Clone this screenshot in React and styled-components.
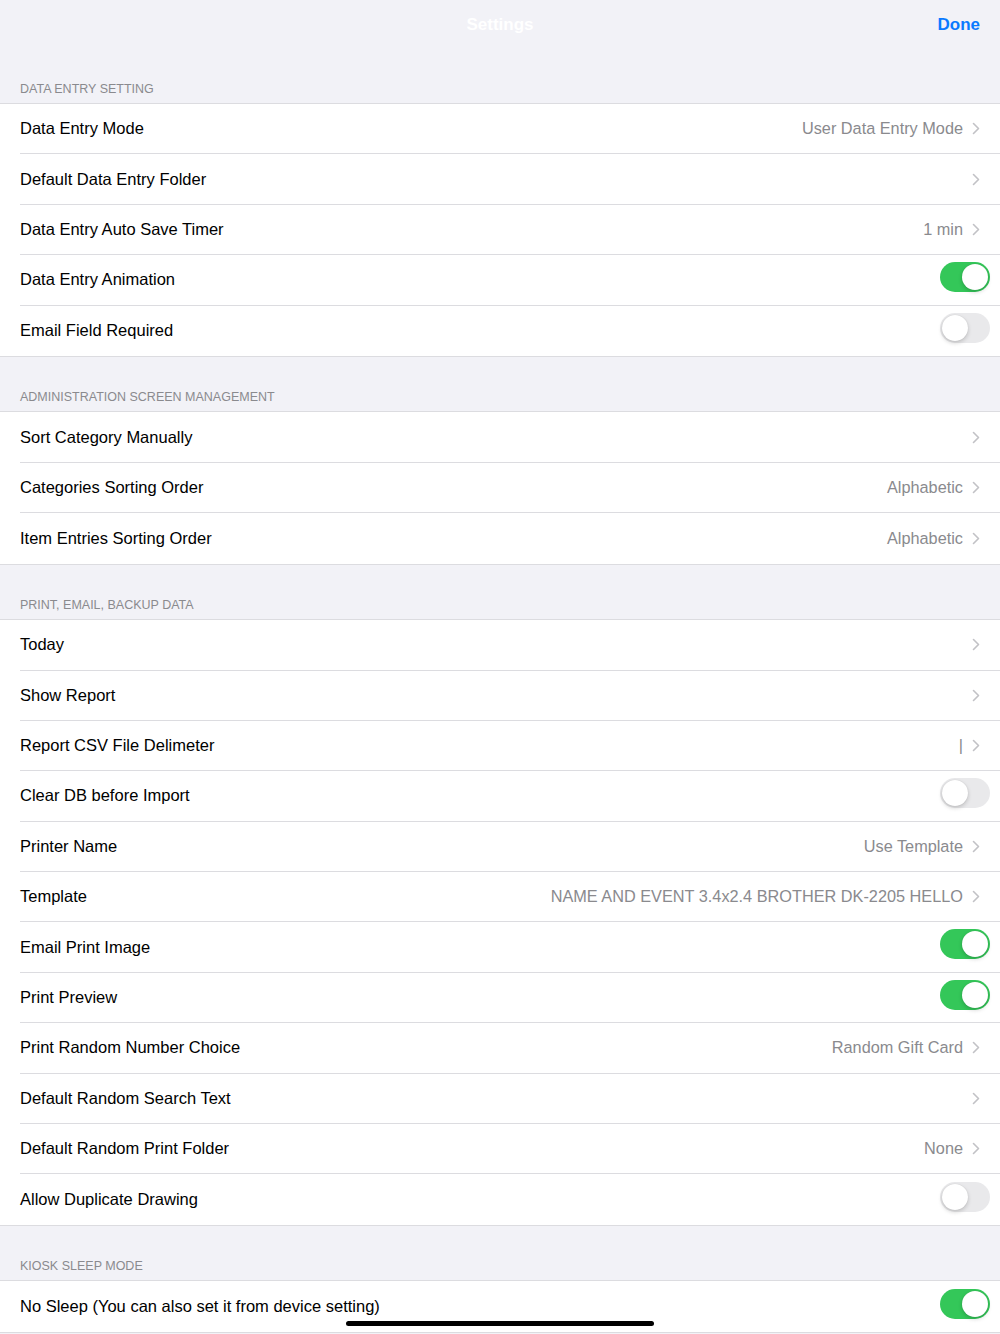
import React from 'react'
import styled, { createGlobalStyle } from 'styled-components'

const GlobalStyle = createGlobalStyle`
    html, body {
        margin: 0;
        padding: 0;
        background: #f2f2f7;
        font-family: "Liberation Sans", Arial, sans-serif;
        -webkit-font-smoothing: antialiased;
    }
    * { box-sizing: border-box; }
`

const sections = [
    {
        title: 'Data Entry Setting',
        rows: [
            { label: 'Data Entry Mode', value: 'User Data Entry Mode', chevron: true },
            { label: 'Default Data Entry Folder', chevron: true },
            { label: 'Data Entry Auto Save Timer', value: '1 min', chevron: true },
            { label: 'Data Entry Animation', toggle: true, on: true },
            { label: 'Email Field Required', toggle: true, on: false },
        ],
    },
    {
        title: 'Administration Screen Management',
        rows: [
            { label: 'Sort Category Manually', chevron: true },
            { label: 'Categories Sorting Order', value: 'Alphabetic', chevron: true },
            { label: 'Item Entries Sorting Order', value: 'Alphabetic', chevron: true },
        ],
    },
    {
        title: 'Print, Email, Backup Data',
        rows: [
            { label: 'Today', chevron: true },
            { label: 'Show Report', chevron: true },
            { label: 'Report CSV File Delimeter', value: '|', chevron: true },
            { label: 'Clear DB before Import', toggle: true, on: false },
            { label: 'Printer Name', value: 'Use Template', chevron: true },
            { label: 'Template', value: 'NAME AND EVENT 3.4x2.4 BROTHER DK-2205 HELLO', chevron: true },
            { label: 'Email Print Image', toggle: true, on: true },
            { label: 'Print Preview', toggle: true, on: true },
            { label: 'Print Random Number Choice', value: 'Random Gift Card', chevron: true },
            { label: 'Default Random Search Text', chevron: true },
            { label: 'Default Random Print Folder', value: 'None', chevron: true },
            { label: 'Allow Duplicate Drawing', toggle: true, on: false },
        ],
    },
    {
        title: 'Kiosk Sleep Mode',
        rows: [
            { label: 'No Sleep (You can also set it from device setting)', toggle: true, on: true },
        ],
    },
]

function Chevron() {
    return (
        <ChevronIcon width="8" height="13" viewBox="0 0 8 13">
            <path d="M1.5 1.5 L6.5 6.5 L1.5 11.5" fill="none" stroke="#c2c2c6" strokeWidth="1.6" strokeLinecap="round" strokeLinejoin="round" />
        </ChevronIcon>
    )
}

function App() {
    return (
        <>
            <GlobalStyle />
            <Page>
                <NavBar>
                    <NavTitle>Settings</NavTitle>
                    <DoneButton>Done</DoneButton>
                </NavBar>
                {sections.map((section) => (
                    <section key={section.title}>
                        <SectionHeader>{section.title}</SectionHeader>
                        <Group>
                            {section.rows.map((row) => (
                                <Row key={row.label}>
                                    <RowInner>
                                        <Label>{row.label}</Label>
                                        {row.value && <Value>{row.value}</Value>}
                                        {row.chevron && <Chevron />}
                                        {row.toggle && (
                                            <Switch $on={row.on}>
                                                <Knob $on={row.on} />
                                            </Switch>
                                        )}
                                    </RowInner>
                                </Row>
                            ))}
                        </Group>
                    </section>
                ))}
            </Page>
            <HomeIndicator />
        </>
    )
}

export default App

const Page = styled.div`
    width: 1000px;
    height: 1334px;
    overflow: hidden;
    background: #f2f2f7;
`

const NavBar = styled.header`
    height: 48.5px;
    display: flex;
    align-items: center;
    justify-content: center;
    position: relative;
`

const NavTitle = styled.h1`
    margin: 0;
    padding-top: 2px;
    font-size: 17px;
    font-weight: 600;
    color: #ffffff;
`

const DoneButton = styled.button`
    position: absolute;
    right: 20px;
    top: 15px;
    border: none;
    background: none;
    padding: 0;
    font-family: inherit;
    font-size: 17px;
    font-weight: 700;
    color: #0a7aff;
`

const SectionHeader = styled.div`
    height: 54.5px;
    display: flex;
    align-items: flex-end;
    padding: 0 20px 6px;
    font-size: 12.5px;
    line-height: 15px;
    text-transform: uppercase;
    color: #8a8a8e;
`

const Group = styled.div`
    background: #ffffff;
    border-top: 1px solid #dcdce0;
    border-bottom: 1px solid #dcdce0;
`

const Row = styled.div`
    padding-left: 20px;
    height: 50.4px;

    &:last-child > div {
        border-bottom: none;
    }
`

const RowInner = styled.div`
    height: 100%;
    display: flex;
    align-items: center;
    padding-right: 10px;
    border-bottom: 1px solid #dcdce0;
`

const Label = styled.span`
    flex: 1;
    font-size: 16.5px;
    color: #000000;
    white-space: nowrap;
`

const Value = styled.span`
    font-size: 16.3px;
    color: #8a8a8e;
    white-space: nowrap;
    margin-right: 9px;
`

const ChevronIcon = styled.svg`
    display: block;
    margin-right: 10px;
    flex-shrink: 0;
`

const Switch = styled.div`
    width: 50px;
    height: 30px;
    border-radius: 15px;
    margin-bottom: 6px;
    background: ${(p) => (p.$on ? '#34c759' : '#e9e9eb')};
    position: relative;
`

const Knob = styled.div`
    position: absolute;
    top: 2px;
    left: ${(p) => (p.$on ? '22px' : '2px')};
    width: 26px;
    height: 26px;
    border-radius: 50%;
    background: #ffffff;
    box-shadow: 0 2px 4px rgba(0, 0, 0, 0.18), 0 0 1px rgba(0, 0, 0, 0.15);
`

const HomeIndicator = styled.div`
    position: fixed;
    left: 346px;
    top: 1321px;
    width: 308px;
    height: 5px;
    border-radius: 3px;
    background: #000000;
`
